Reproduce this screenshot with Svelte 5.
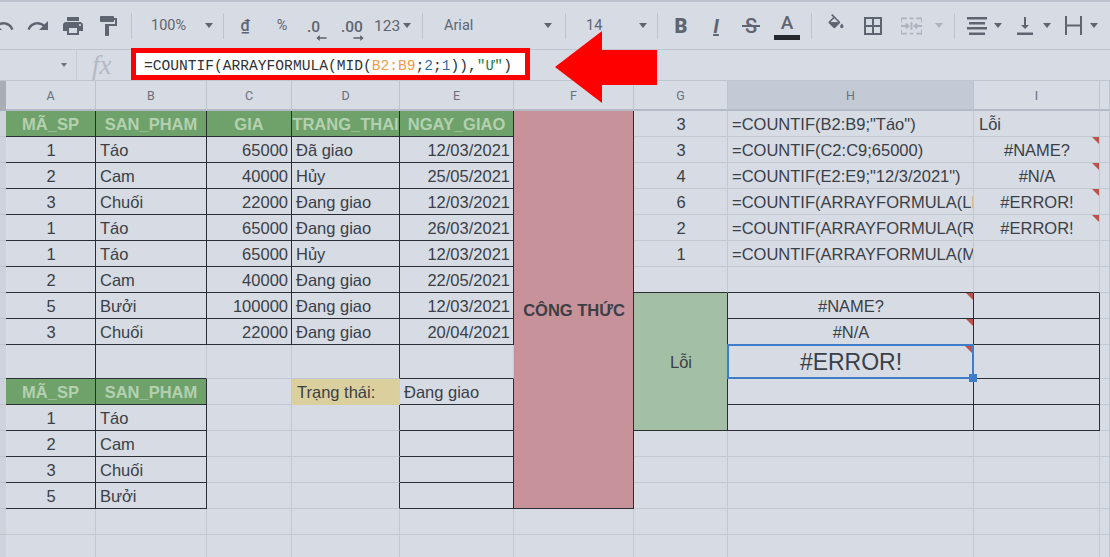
<script>
  const undo = 'M12.5 8c-2.65 0-5.05.99-6.9 2.6L2 7v9h9l-3.62-3.62c1.39-1.16 3.16-1.88 5.12-1.88 3.54 0 6.55 2.31 7.6 5.5l2.37-.78C21.08 11.03 17.15 8 12.5 8z';
  const redo = 'M18.4 10.6C16.55 8.99 14.15 8 11.5 8c-4.65 0-8.58 3.03-9.96 7.22L3.9 16c1.05-3.19 4.05-5.5 7.6-5.5 1.95 0 3.73.72 5.12 1.88L13 16h9V7l-3.6 3.6z';
  const print = 'M19 8H5c-1.66 0-3 1.34-3 3v6h4v4h12v-4h4v-6c0-1.66-1.34-3-3-3zm-3 11H8v-5h8v5zm3-7c-.55 0-1-.45-1-1s.45-1 1-1 1 .45 1 1-.45 1-1 1zm-1-9H6v4h12V3z';
  const paint = 'M18 4V3c0-.55-.45-1-1-1H5c-.55 0-1 .45-1 1v4c0 .55.45 1 1 1h12c.55 0 1-.45 1-1V6h1v4H9v11c0 .55.45 1 1 1h2c.55 0 1-.45 1-1v-9h8V4h-3z';

  const colHeads = ['', 'A', 'B', 'C', 'D', 'E', 'F', 'G', 'H', 'I', ''];

  const products = [
    ['1', 'Táo', '65000', 'Đã giao', '12/03/2021'],
    ['2', 'Cam', '40000', 'Hủy', '25/05/2021'],
    ['3', 'Chuối', '22000', 'Đang giao', '12/03/2021'],
    ['1', 'Táo', '65000', 'Đang giao', '26/03/2021'],
    ['1', 'Táo', '65000', 'Hủy', '12/03/2021'],
    ['2', 'Cam', '40000', 'Đang giao', '22/05/2021'],
    ['5', 'Bưởi', '100000', 'Đang giao', '12/03/2021'],
    ['3', 'Chuối', '22000', 'Đang giao', '20/04/2021']
  ];

  const counts = [
    ['3', '=COUNTIF(B2:B9;"Táo")', 'Lỗi', ''],
    ['3', '=COUNTIF(C2:C9;65000)', '#NAME?', 'ctr note'],
    ['4', '=COUNTIF(E2:E9;"12/3/2021")', '#N/A', 'ctr note'],
    ['6', '=COUNTIF(ARRAYFORMULA(LEFT(B2:B9;1));"T")', '#ERROR!', 'ctr note'],
    ['2', '=COUNTIF(ARRAYFORMULA(RIGHT(B2:B9;1));"m")', '#ERROR!', 'ctr note'],
    ['1', '=COUNTIF(ARRAYFORMULA(MID(B2:B9;2;1));"Ư")', '', '']
  ];

  const lower = [
    ['1', 'Táo'],
    ['2', 'Cam'],
    ['3', 'Chuối'],
    ['5', 'Bưởi']
  ];
</script>

{#snippet icon(d, size = 24)}
  <svg width={size} height={size} viewBox="0 0 24 24"><path {d} /></svg>
{/snippet}

<div class="page">
  <div class="toolbar">
    <button class="tool first">{@render icon(undo)}</button>
    <button class="tool w35">{@render icon(redo)}</button>
    <button class="tool w35">{@render icon(print)}</button>
    <button class="tool w35">{@render icon(paint)}</button>
    <span class="sep first-sep"></span>
    <div class="select zoom"><span>100%</span><i class="caret"></i></div>
    <span class="sep"></span>
    <button class="tool txt dong">₫</button>
    <button class="tool txt pct">%</button>
    <button class="tool txt dec dec0">
      <span>.0</span>
      <svg class="dec-arrow" width="11" height="6" viewBox="0 0 12 7"><path d="M0 3.500 4 0v2.500h8v2H4V7z" /></svg>
    </button>
    <button class="tool txt dec dec00">
      <span>.00</span>
      <svg class="dec-arrow" width="11" height="6" viewBox="0 0 12 7"><path d="M12 3.500 8 0v2.500H0v2h8V7z" /></svg>
    </button>
    <div class="select fmt"><span>123</span><i class="caret"></i></div>
    <span class="sep"></span>
    <div class="select font"><span>Arial</span><i class="caret"></i></div>
    <span class="sep"></span>
    <div class="select fsize"><span>14</span><i class="caret"></i></div>
    <span class="sep"></span>
    <button class="tool glyph bold">B</button>
    <button class="tool glyph ital">I</button>
    <button class="tool glyph strike">S</button>
    <button class="tool glyph colour"><span>A</span><i class="colour-bar"></i></button>
    <span class="sep colour-sep"></span>
    <button class="tool fill">
      <svg width="20" height="20" viewBox="0 0 24 24">
        <path d="M16.56 8.94 7.62 0 6.21 1.41l2.38 2.38-5.15 5.15c-.59.59-.59 1.54 0 2.12l5.5 5.5c.29.29.68.44 1.06.44s.77-.15 1.06-.44l5.5-5.5c.59-.58.59-1.53 0-2.12zM5.21 10 10 5.21 14.79 10H5.21zM19 11.500s-2 2.17-2 3.500c0 1.100.9 2 2 2s2-.9 2-2c0-1.330-2-3.500-2-3.500z" />
        <path d="M4.500 10h11l-5.500 6z" />
      </svg>
    </button>
    <button class="tool borders">
      <svg width="18" height="18" viewBox="0 0 18 18"><path d="M0 0v18h18V0zm8 16H2v-6h6zm0-8H2V2h6zm8 8h-6v-6h6zm0-8h-6V2h6z" /></svg>
    </button>
    <button class="tool merge">
      <svg width="21" height="18" viewBox="0 0 22 18">
        <path class="dash" d="M0 5V1h6M16 1h6v4M0 13v4h6M16 17h6v-4M9 1h4M9 17h4" />
        <path class="dash" d="M0 9h7M5 6.500 8 9l-3 2.500M22 9h-7M17 6.500 14 9l3 2.500M11 5v8" />
      </svg>
    </button>
    <i class="caret faded"></i>
    <span class="sep merge-sep"></span>
    <div class="icon-select align">
      <svg width="20" height="18" viewBox="0 0 20 18"><path d="M0 0h20v2.500H0zM2 5h16v2.500H2zM0 10h20v2.500H0zM2 15.500h16V18H2z" /></svg>
      <i class="caret"></i>
    </div>
    <div class="icon-select valign">
      <svg width="16" height="18" viewBox="0 0 16 18"><path d="M7 0h2v8h3l-4 4-4-4h3zM0 15.500h16V18H0z" /></svg>
      <i class="caret"></i>
    </div>
    <div class="icon-select wrap">
      <svg width="19" height="19" viewBox="0 0 19 19"><path d="M1 0h2v19H1zM16 0h2v19h-2zM3 8.500h13v2H3z" /></svg>
      <i class="caret"></i>
    </div>
  </div>

  <div class="formula">
    <div class="namebox"><i class="caret small"></i></div>
    <span class="fx">fx</span>
  </div>

  <div class="sheet">
    {#each colHeads as h, i}
      <div class="head" class:corner={i === 0} class:picked={h === 'H'}>{h}</div>
    {/each}

    <!-- row 1 -->
    <div class="rh"></div>
    {#each ['MÃ_SP', 'SAN_PHAM', 'GIA', 'TRANG_THAI', 'NGAY_GIAO'] as t}
      <div class="cell dark green ctr">{t}</div>
    {/each}
    <div class="cell recipe">CÔNG THỨC</div>
    <div class="cell ctr">{counts[0][0]}</div>
    <div class="cell">{counts[0][1]}</div>
    <div class="cell lead">{counts[0][2]}</div>
    <div class="cell"></div>

    <!-- rows 2 to 9 -->
    {#each products as p, i}
      <div class="rh"></div>
      <div class="cell dark ctr">{p[0]}</div>
      <div class="cell dark">{p[1]}</div>
      <div class="cell dark num">{p[2]}</div>
      <div class="cell dark">{p[3]}</div>
      <div class="cell dark num">{p[4]}</div>
      {#if i < 5}
        <div class="cell ctr">{counts[i + 1][0]}</div>
        <div class="cell">{counts[i + 1][1]}</div>
        <div class="cell {counts[i + 1][3]}">{counts[i + 1][2]}</div>
        <div class="cell"></div>
      {:else if i === 5}
        <div class="cell dark-b"></div>
        <div class="cell dark-b"></div>
        <div class="cell dark-b"></div>
        <div class="cell"></div>
      {:else if i === 6}
        <div class="cell sage">Lỗi</div>
        <div class="cell dark ctr note">#NAME?</div>
        <div class="cell dark"></div>
        <div class="cell"></div>
      {:else}
        <div class="cell dark ctr note">#N/A</div>
        <div class="cell dark"></div>
        <div class="cell"></div>
      {/if}
    {/each}

    <!-- row 10 -->
    <div class="rh"></div>
    <div class="cell dark"></div>
    <div class="cell dark-b"></div>
    <div class="cell"></div>
    <div class="cell dark-r"></div>
    <div class="cell dark-b"></div>
    <div class="cell selected ctr">#ERROR!<i class="handle"></i></div>
    <div class="cell dark"></div>
    <div class="cell"></div>

    <!-- row 11 -->
    <div class="rh"></div>
    <div class="cell dark green ctr">MÃ_SP</div>
    <div class="cell dark green ctr">SAN_PHAM</div>
    <div class="cell"></div>
    <div class="cell status">Trạng thái:</div>
    <div class="cell dark">Đang giao</div>
    <div class="cell dark"></div>
    <div class="cell dark"></div>
    <div class="cell"></div>

    <!-- rows 12 to 15 -->
    {#each lower as l, i}
      <div class="rh"></div>
      <div class="cell dark ctr">{l[0]}</div>
      <div class="cell dark">{l[1]}</div>
      <div class="cell"></div>
      <div class="cell dark-r"></div>
      <div class="cell dark"></div>
      {#if i === 0}
        <div class="cell dark"></div>
        <div class="cell dark"></div>
      {:else}
        <div class="cell"></div>
        <div class="cell"></div>
        <div class="cell"></div>
      {/if}
      <div class="cell"></div>
    {/each}

    <!-- rows 16, 17 -->
    {#each [0, 1] as r}
      <div class="rh"></div>
      {#each Array(10) as _}
        <div class="cell"></div>
      {/each}
    {/each}
  </div>

  <!-- annotations painted over the screenshot -->
  <div class="formula-box">
    <span>=COUNTIF(ARRAYFORMULA(MID(<b class="orange">B2:B9</b>;<b class="blue">2</b>;<b class="blue">1</b>)),<b class="quote">"Ư"</b>)</span>
  </div>
  <svg class="arrow" width="102" height="72" viewBox="0 0 102 72"><path d="M0 36 47 0v19h55v35H47v18z" /></svg>
</div>

<style>
  :global(body) {
    margin: 0;
    background: #d6dbe4;
  }

  .page {
    position: relative;
    width: 1110px;
    height: 557px;
    overflow: hidden;
    background: #d6dbe4;
    color: #3b3f47;
    font-family: "Liberation Sans", Arial, sans-serif;
  }

  /* toolbar */
  .toolbar {
    display: flex;
    align-items: center;
    height: 50px;
    box-sizing: border-box;
    border-top: 2px solid #bcc3cf;
    border-bottom: 1px solid #bfc5cf;
    font-family: Roboto, sans-serif;
    color: #5f6570;
    fill: #5f6570;
  }

  button {
    all: unset;
    box-sizing: border-box;
  }

  .tool {
    display: flex;
    flex-direction: column;
    align-items: center;
    justify-content: center;
    height: 30px;
    flex: none;
  }

  .first {
    width: 35px;
    margin-left: -15px;
  }

  .w35 {
    width: 35px;
  }

  .sep {
    flex: none;
    width: 1px;
    height: 26px;
    background: #bfc5cf;
  }

  .first-sep {
    margin-left: 6px;
  }

  .select {
    display: flex;
    align-items: center;
    flex: none;
    box-sizing: border-box;
    height: 30px;
    font-size: 14.5px;
  }

  .zoom {
    width: 91px;
    padding: 0 10px 0 19px;
    justify-content: space-between;
  }

  .fmt {
    width: 57px;
    padding: 0 11px 0 9px;
    justify-content: space-between;
    font-size: 15.5px;
  }

  .font {
    width: 142px;
    padding: 0 13px 0 21px;
    justify-content: space-between;
  }

  .fsize {
    width: 91px;
    padding: 0 10px 0 20px;
    justify-content: space-between;
  }

  .caret {
    display: block;
    flex: none;
    width: 0;
    height: 0;
    border-left: 4.5px solid transparent;
    border-right: 4.5px solid transparent;
    border-top: 5px solid #5f6570;
  }

  .caret.small {
    border-width: 4px 3.5px 0;
    border-top-color: #6d737d;
  }

  .caret.faded {
    border-top-color: #aeb4bf;
    margin-right: 11px;
  }

  .txt {
    font-size: 14.5px;
  }

  .dong {
    width: 42px;
    font-size: 16px;
    text-decoration: underline;
    font-weight: 500;
  }

  .pct {
    width: 32px;
  }

  .dec {
    align-items: flex-start;
    margin-top: 10px;
  }

  .dec span {
    font-size: 15.5px;
    line-height: 12px;
    font-weight: 500;
  }

  .dec-arrow {
    display: block;
    margin-top: 2px;
  }

  .dec0 {
    width: 40px;
    padding-left: 9px;
  }

  .dec0 .dec-arrow {
    margin-left: 9px;
  }

  .dec00 {
    width: 27px;
    padding-left: 3px;
  }

  .dec00 .dec-arrow {
    margin-left: 12px;
  }

  .glyph {
    font-size: 20px;
  }

  .bold {
    width: 46px;
    font-weight: 900;
  }

  .ital {
    width: 24px;
    font-style: italic;
    font-weight: 700;
    text-decoration: underline;
  }

  .strike {
    position: relative;
    width: 46px;
    font-weight: 500;
  }

  .strike::after {
    content: "";
    position: absolute;
    left: 14px;
    top: 14px;
    width: 18px;
    height: 2px;
    background: #5f6570;
  }

  .colour {
    width: 26px;
    font-weight: 500;
    font-size: 19px;
  }

  .colour span {
    line-height: 20px;
    margin-top: 1px;
  }

  .colour-bar {
    display: block;
    width: 26px;
    height: 5px;
    margin-top: 2px;
    background: #25282f;
  }

  .colour-sep {
    margin-left: 11px;
  }

  .fill {
    width: 47px;
    margin-top: -3px;
  }

  .borders {
    width: 28px;
  }

  .merge {
    width: 48px;
  }

  .dash {
    fill: none;
    stroke: #aeb4bf;
    stroke-width: 2;
  }

  .merge-sep {
    margin-left: 0;
  }

  .icon-select {
    display: flex;
    align-items: center;
    flex: none;
    height: 30px;
  }

  .align {
    margin-left: 12px;
    gap: 7px;
  }

  .valign {
    margin-left: 15px;
    gap: 10px;
  }

  .wrap {
    margin-left: 13px;
    gap: 7px;
  }

  /* formula bar */
  .formula {
    display: flex;
    align-items: center;
    height: 31px;
    box-sizing: border-box;
    border-bottom: 1px solid #bfc5cf;
  }

  .namebox {
    display: flex;
    align-items: center;
    justify-content: flex-end;
    box-sizing: border-box;
    width: 77px;
    height: 100%;
    padding-right: 9px;
    border-right: 1px solid #c6ccd6;
  }

  .fx {
    margin-left: 15px;
    font-family: "Liberation Serif", serif;
    font-style: italic;
    font-size: 27px;
    color: #b4bac4;
  }

  .formula-box {
    position: absolute;
    left: 131px;
    top: 48px;
    display: flex;
    align-items: center;
    box-sizing: border-box;
    width: 399px;
    height: 32px;
    padding: 3px 0 0 8px;
    border: 5px solid #fe0000;
    background: #fff;
    font-family: "Liberation Mono", monospace;
    font-size: 14.6px;
    color: #2e3239;
  }

  .formula-box b {
    font-weight: 400;
  }

  .orange {
    color: #ef9a4a;
  }

  .blue {
    color: #2b6fb5;
  }

  .quote {
    color: #2f7d45;
  }

  .arrow {
    position: absolute;
    left: 555px;
    top: 31px;
    fill: #fe0000;
  }

  /* sheet */
  .sheet {
    display: grid;
    grid-template-columns: 6px 90px 111px 85px 108px 114px 120px 94px 246px 126px 10px;
    grid-template-rows: 30px repeat(9, 26px) 34px repeat(7, 26px);
    font-size: 16.5px;
  }

  .head {
    display: flex;
    align-items: center;
    justify-content: center;
    box-sizing: border-box;
    border-right: 1px solid #bfc5cf;
    border-bottom: 2px solid #b4bac5;
    color: #6a707a;
    font-size: 12.5px;
    font-family: Roboto, sans-serif;
  }

  .corner {
    background: #a9aeb6;
    border: 0;
  }

  .picked {
    background: #c3cad6;
  }

  .rh {
    box-sizing: border-box;
    background: #cdd2dc;
    border-bottom: 1px solid #bfc5cf;
  }

  .cell {
    position: relative;
    display: flex;
    align-items: center;
    box-sizing: border-box;
    min-width: 0;
    padding: 1px 3px 0 4px;
    overflow: hidden;
    white-space: nowrap;
    border-right: 1px solid #c3c9d3;
    border-bottom: 1px solid #c3c9d3;
  }

  .dark {
    border-right-color: #2a2d33;
    border-bottom-color: #2a2d33;
  }

  .dark-r {
    border-right-color: #2a2d33;
  }

  .dark-b {
    border-bottom-color: #2a2d33;
  }

  .ctr {
    justify-content: center;
  }

  .num {
    justify-content: flex-end;
  }

  .lead {
    padding-left: 5px;
  }

  .green {
    padding: 1px 1px 0;
    background: #6ea26a;
    color: #b5d0b0;
    font-weight: 700;
  }

  .recipe {
    grid-column: 7;
    grid-row: 2 / span 15;
    justify-content: center;
    background: #c8929b;
    font-weight: 700;
    border-right-color: #2a2d33;
    border-bottom-color: #2a2d33;
  }

  .sage {
    grid-column: 8;
    grid-row: 9 / span 5;
    justify-content: center;
    background: #a3bfa5;
    border-right-color: #2a2d33;
    border-bottom-color: #2a2d33;
  }

  .status {
    background: #dccf9e;
    border-color: #dccf9e;
    padding-left: 5px;
  }

  .note::after {
    content: "";
    position: absolute;
    top: 0;
    right: 0;
    border-top: 7px solid #b9534c;
    border-left: 7px solid transparent;
  }

  .selected {
    overflow: visible;
    font-size: 23px;
    margin: -1px 0 0 -1px;
    border: 2px solid #3f7cc9;
    z-index: 1;
  }

  .selected::after {
    content: "";
    position: absolute;
    top: 0;
    right: 0;
    border-top: 7px solid #b9534c;
    border-left: 7px solid transparent;
  }

  .handle {
    position: absolute;
    right: -5px;
    bottom: -5px;
    width: 8px;
    height: 8px;
    background: #3f7cc9;
  }
</style>
